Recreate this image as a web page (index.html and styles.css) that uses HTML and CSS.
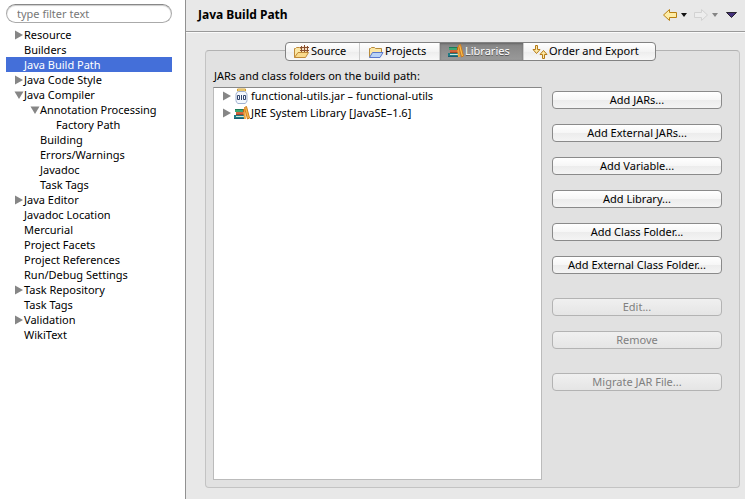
FILE: index.html
```html
<!DOCTYPE html>
<html lang="en">
<head>
<meta charset="utf-8">
<meta name="viewport" content="width=device-width, initial-scale=1">
<title>Java Build Path</title>
<link rel="stylesheet" href="styles.css">
</head>
<body>
<svg class="defs" aria-hidden="true">
  <symbol id="closed" viewBox="0 0 10 10"><path d="M1 0.5L9 5L1 9.500z" fill="#868686"/></symbol>
  <symbol id="open" viewBox="0 0 10 10"><path d="M0.5 1.500H9.500L5 9z" fill="#868686"/></symbol>
  <symbol id="books" viewBox="0 0 16 16">
    <path d="M1 4h8v3H1z" fill="#3fa572"/><path d="M1 4h8v1H1z" fill="#1c7a58"/>
    <path d="M2 7h8v3H2z" fill="#d0653c"/><path d="M2 9h8v1H2z" fill="#a54422"/>
    <path d="M0 10h11v4H0z" fill="#1f7c84"/><path d="M2 11h9v1H2z" fill="#cfe6dc"/><path d="M0 13h11v1H0z" fill="#1b5a70"/>
    <path d="M9 4h2l1 10h-2z" fill="#f0a63c"/><path d="M9 4h1v3H9z" fill="#b86414"/>
    <path d="M10.500 2.500l2-1 3 11.500-2 1z" fill="#f8bd4a" stroke="#cf7a1e"/>
  </symbol>
</svg>
<div class="window">
  <nav class="sidebar" aria-label="Properties">
    <input class="filter" type="text" placeholder="type filter text" aria-label="Filter">
    <ul class="tree">
      <li><a class="row" href="#"><svg class="twisty"><use href="#closed"/></svg>Resource</a></li>
      <li><a class="row" href="#"><i class="twisty"></i>Builders</a></li>
      <li><a class="row selected" href="#" aria-current="page"><i class="twisty"></i>Java Build Path</a></li>
      <li><a class="row" href="#"><svg class="twisty"><use href="#closed"/></svg>Java Code Style</a></li>
      <li><a class="row" href="#"><svg class="twisty"><use href="#open"/></svg>Java Compiler</a>
        <ul>
          <li><a class="row" href="#"><svg class="twisty"><use href="#open"/></svg>Annotation Processing</a>
            <ul>
              <li><a class="row" href="#"><i class="twisty"></i>Factory Path</a></li>
            </ul>
          </li>
          <li><a class="row" href="#"><i class="twisty"></i>Building</a></li>
          <li><a class="row" href="#"><i class="twisty"></i>Errors/Warnings</a></li>
          <li><a class="row" href="#"><i class="twisty"></i>Javadoc</a></li>
          <li><a class="row" href="#"><i class="twisty"></i>Task Tags</a></li>
        </ul>
      </li>
      <li><a class="row" href="#"><svg class="twisty"><use href="#closed"/></svg>Java Editor</a></li>
      <li><a class="row" href="#"><i class="twisty"></i>Javadoc Location</a></li>
      <li><a class="row" href="#"><i class="twisty"></i>Mercurial</a></li>
      <li><a class="row" href="#"><i class="twisty"></i>Project Facets</a></li>
      <li><a class="row" href="#"><i class="twisty"></i>Project References</a></li>
      <li><a class="row" href="#"><i class="twisty"></i>Run/Debug Settings</a></li>
      <li><a class="row" href="#"><svg class="twisty"><use href="#closed"/></svg>Task Repository</a></li>
      <li><a class="row" href="#"><i class="twisty"></i>Task Tags</a></li>
      <li><a class="row" href="#"><svg class="twisty"><use href="#closed"/></svg>Validation</a></li>
      <li><a class="row" href="#"><i class="twisty"></i>WikiText</a></li>
    </ul>
  </nav>
  <main class="page">
    <header class="header">
      <h1>Java Build Path</h1>
      <div class="history">
        <button class="tool" aria-label="Back"><svg width="16" height="16" viewBox="0 0 16 16"><path d="M1.500 8L7.500 2.500V5.500H14.500V10.500H7.500V13.500z" fill="#fdeca6" stroke="#b98012" stroke-linejoin="round"/></svg></button>
        <button class="tool menu" aria-label="Back history"><svg width="6" height="4" viewBox="0 0 6 4"><path d="M0 0H6L3 4z" fill="#111"/></svg></button>
        <button class="tool" aria-label="Forward" disabled><svg width="16" height="16" viewBox="0 0 16 16"><path d="M14.500 8L8.500 2.500V5.500H1.500V10.500H8.500V13.500z" fill="#ededed" stroke="#d2d2d2" stroke-linejoin="round"/></svg></button>
        <button class="tool menu" aria-label="Forward history" disabled><svg width="6" height="4" viewBox="0 0 6 4"><path d="M0 0H6L3 4z" fill="#858585"/></svg></button>
        <button class="tool view" aria-label="View menu"><svg width="11" height="6" viewBox="0 0 11 6"><path d="M.5 .5H10.500L5.500 5.500z" fill="#43307c" stroke="#29252f"/></svg></button>
      </div>
    </header>
    <section class="panel">
      <div class="tabs" role="tablist">
        <button class="tab source" role="tab" aria-selected="false"><svg class="icon" viewBox="0 0 16 16"><path d="M.5 14.500V5.500H1.500L2.500 4.500H5.500L6.500 5.500H12.500V9" fill="#fbe7a6" stroke="#c08a38"/><path d="M7.500 3.500h6v5h-6z" fill="#f6dfc0"/><path d="M7.500 3v6M10.500 2v7M13.500 3v6M6 4.500h9M6 7.500h9" fill="none" stroke="#8a5030"/><path d="M.5 14.500L4 9.500H14.500L11.500 14.500z" fill="#f9da8c" stroke="#c08a38"/></svg>Source</button>
        <button class="tab projects" role="tab" aria-selected="false"><svg class="icon" viewBox="0 0 16 16"><path d="M1.500 14.500V5.500H2.500L3.500 4.500H6.500L7.500 5.500H13.500V9" fill="#fbe7a6" stroke="#b88b3a"/><path d="M1.500 14.500L4.500 9.500H15L12 14.500z" fill="#b9d3f7" stroke="#5a78cc"/></svg>Projects</button>
        <button class="tab libraries" role="tab" aria-selected="true"><svg class="icon"><use href="#books"/></svg>Libraries</button>
        <button class="tab order" role="tab" aria-selected="false"><svg class="icon" viewBox="0 0 16 16"><path d="M3.500 2.500H5.500V6.500H8L4.500 10.500L1 6.500H3.500z" fill="#fde9a5" stroke="#b57a18"/><path d="M10.500 15.500H12.500V11.500H15L11.500 7.500L8 11.500H10.500z" fill="#fde9a5" stroke="#b57a18"/></svg>Order and Export</button>
      </div>
      <h2 id="list-label">JARs and class folders on the build path:</h2>
      <div class="content">
        <ul class="entries" aria-labelledby="list-label">
          <li><a class="entry" href="#"><svg class="twisty"><use href="#closed"/></svg><svg class="icon" viewBox="0 0 16 16"><path d="M3.500 1h8v2h-8z" fill="#fbe9b0" stroke="#d3a02c"/><path d="M4.500 3.500h6q2.500 1 2.500 3v6q0 2-2 3h-7q-2-1-2-3v-6q0-2 2.500-3z" fill="#f4f8fe" stroke="#9fb0cf"/><path d="M3.500 7.500h2v4h-2zM7.500 7v5M9.500 7.500h2v4h-2z" fill="none" stroke="#34476f"/></svg>functional-utils.jar – functional-utils</a></li>
          <li><a class="entry" href="#"><svg class="twisty"><use href="#closed"/></svg><svg class="icon"><use href="#books"/></svg>JRE System Library [JavaSE–1.6]</a></li>
        </ul>
        <div class="actions">
          <button class="push">Add JARs...</button>
          <button class="push">Add External JARs...</button>
          <button class="push">Add Variable...</button>
          <button class="push">Add Library...</button>
          <button class="push">Add Class Folder...</button>
          <button class="push">Add External Class Folder...</button>
          <button class="push group" disabled>Edit...</button>
          <button class="push" disabled>Remove</button>
          <button class="push group" disabled>Migrate JAR File...</button>
        </div>
      </div>
    </section>
  </main>
</div>
</body>
</html>
```
FILE: styles.css
```css
* { box-sizing: border-box; }
body { margin: 0; font: 11px/15px "Noto Sans", "Lucida Grande", sans-serif; color: #000; background: #e8e8e8; }
button, input { font: inherit; color: inherit; }
ul { list-style: none; margin: 0; padding: 0; }
a { color: inherit; text-decoration: none; }
.defs { position: absolute; width: 0; height: 0; }
.window { display: flex; min-height: 100vh; }

.sidebar { flex: 0 0 186px; padding: 4px 13px 0 6px; background: #fff; border-right: 1px solid #919191; }
.filter { display: block; width: 100%; height: 19px; padding: 0 10px; border: 1px solid #aaa; border-top-color: #888; border-radius: 10px; background: #fff; box-shadow: inset 0 1px 1px #ccc; outline: 0; }
.filter::placeholder { color: #777; opacity: 1; }
.tree { margin-top: 4px; }
.tree ul { padding-left: 16px; }
.row { display: flex; align-items: center; height: 15px; padding-left: 8px; white-space: nowrap; }
.selected { color: #fff; background: #446fd9; }
.twisty { flex: none; width: 10px; height: 10px; }

.page { flex: 1; min-width: 0; display: flex; flex-direction: column; }
.header { display: flex; align-items: center; justify-content: space-between; height: 32px; padding: 0 8px 2px 12px; border-bottom: 1px solid #999; box-shadow: 0 1px #fafafa; }
h1 { margin: 0; font-size: 12px; font-weight: 700; }
.history { display: flex; align-items: center; }
.tool { display: flex; padding: 0; border: 0; background: none; }
.menu { margin: 0 6px 0 3px; }
.view { margin-left: 2px; }

.panel { flex: 1; display: flex; flex-direction: column; margin: 18px 5px 11px 19px; padding: 0 17px 7px 7px; border: 1px solid #c3c3c3; border-top-color: #b2b2b2; border-radius: 4px; background: #e1e1e1; }
.tabs { display: flex; align-self: center; margin: -9px 0 0 6px; height: 19px; border: 1px solid #828282; border-radius: 4px; background: linear-gradient(#fff, #f3f3f3 50%, #ececec 50%, #f8f8f8); overflow: hidden; }
.tab { display: flex; align-items: center; padding: 0 8px 2px; border: 0; border-right: 1px solid #ccc; background: none; white-space: nowrap; }
.tab:last-child { border-right: 0; }
.tab[aria-selected="true"] { color: #fff; background: linear-gradient(#858585, #999); text-shadow: 0 1px #555; box-shadow: inset 0 1px 2px #666; }
.source { min-width: 74px; }
.projects { min-width: 80px; }
.libraries { min-width: 84px; }
.order { min-width: 131px; }
.icon { flex: none; width: 16px; height: 16px; margin-right: 1px; }
h2 { margin: 7px 0 4px 1px; font-size: 11px; font-weight: 400; }
.content { flex: 1; display: flex; gap: 10px; }
.entries { flex: 1; min-width: 0; background: #fff; border: 1px solid #bbb; border-top-color: #888; }
.entry { display: flex; align-items: center; height: 17px; padding: 0 0 2px 8px; white-space: nowrap; }
.entry .icon { margin-left: 2px; }
.actions { flex: 0 0 170px; display: flex; flex-direction: column; gap: 15px; padding-top: 4px; }
.push { height: 18px; padding: 0 4px 1px; line-height: 15px; border: 1px solid #8a8a8a; border-radius: 4px; background: linear-gradient(#fff, #f6f6f6 50%, #ececec 50%, #f4f4f4); white-space: nowrap; }
.push:disabled { color: #808080; border-color: #b3b3b3; background: linear-gradient(#f0f0f0, #e5e5e5); }
.group { margin-top: 9px; }
```
